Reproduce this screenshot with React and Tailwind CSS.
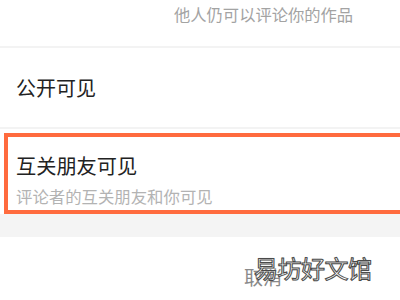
export default function App() {
  const font = { fontFamily: '"Noto Sans CJK SC", "Noto Sans", sans-serif' };
  return (
    <div className="w-[400px] h-[300px] bg-white overflow-hidden relative" style={font}>
      <div className="h-[46px] pl-[174px] pt-[4px] text-[16.3px] leading-[20px] text-[#a3a3a3]">
        他人仍可以评论你的作品
      </div>
      <div className="h-[2px] bg-[#f3f3f3]" />
      <div className="h-[79px] flex items-center pl-[16px] text-[20px] leading-[24px] text-[#222222]">
        公开可见
      </div>
      <div className="h-[2px] bg-[#f3f3f3]" />
      <div className="pt-[4px] pl-[4px]">
        <div className="w-[420px] h-[81px] border-[4px] border-[#ff6b3e] pl-[8px] pt-[17px] flex flex-col">
          <div className="text-[20.2px] leading-[24px] text-[#222222]">互关朋友可见</div>
          <div className="mt-[8px] text-[16.4px] leading-[20px] text-[#b3b3b3]">评论者的互关朋友和你可见</div>
        </div>
      </div>
      <div className="h-[23px] bg-[#f4f4f4]" />
      <div className="pl-[244px] pt-[28px] text-[19px] leading-[24px] text-[#8a8a8a]">取消</div>
      <div
        className="absolute left-[254px] top-[253px] text-[24px] leading-[30px] text-white tracking-[-0.5px]"
        style={{ WebkitTextStroke: '1px #4a4a4a', textShadow: '0 0 1px #888' }}
      >
        易坊好文馆
      </div>
    </div>
  );
}
